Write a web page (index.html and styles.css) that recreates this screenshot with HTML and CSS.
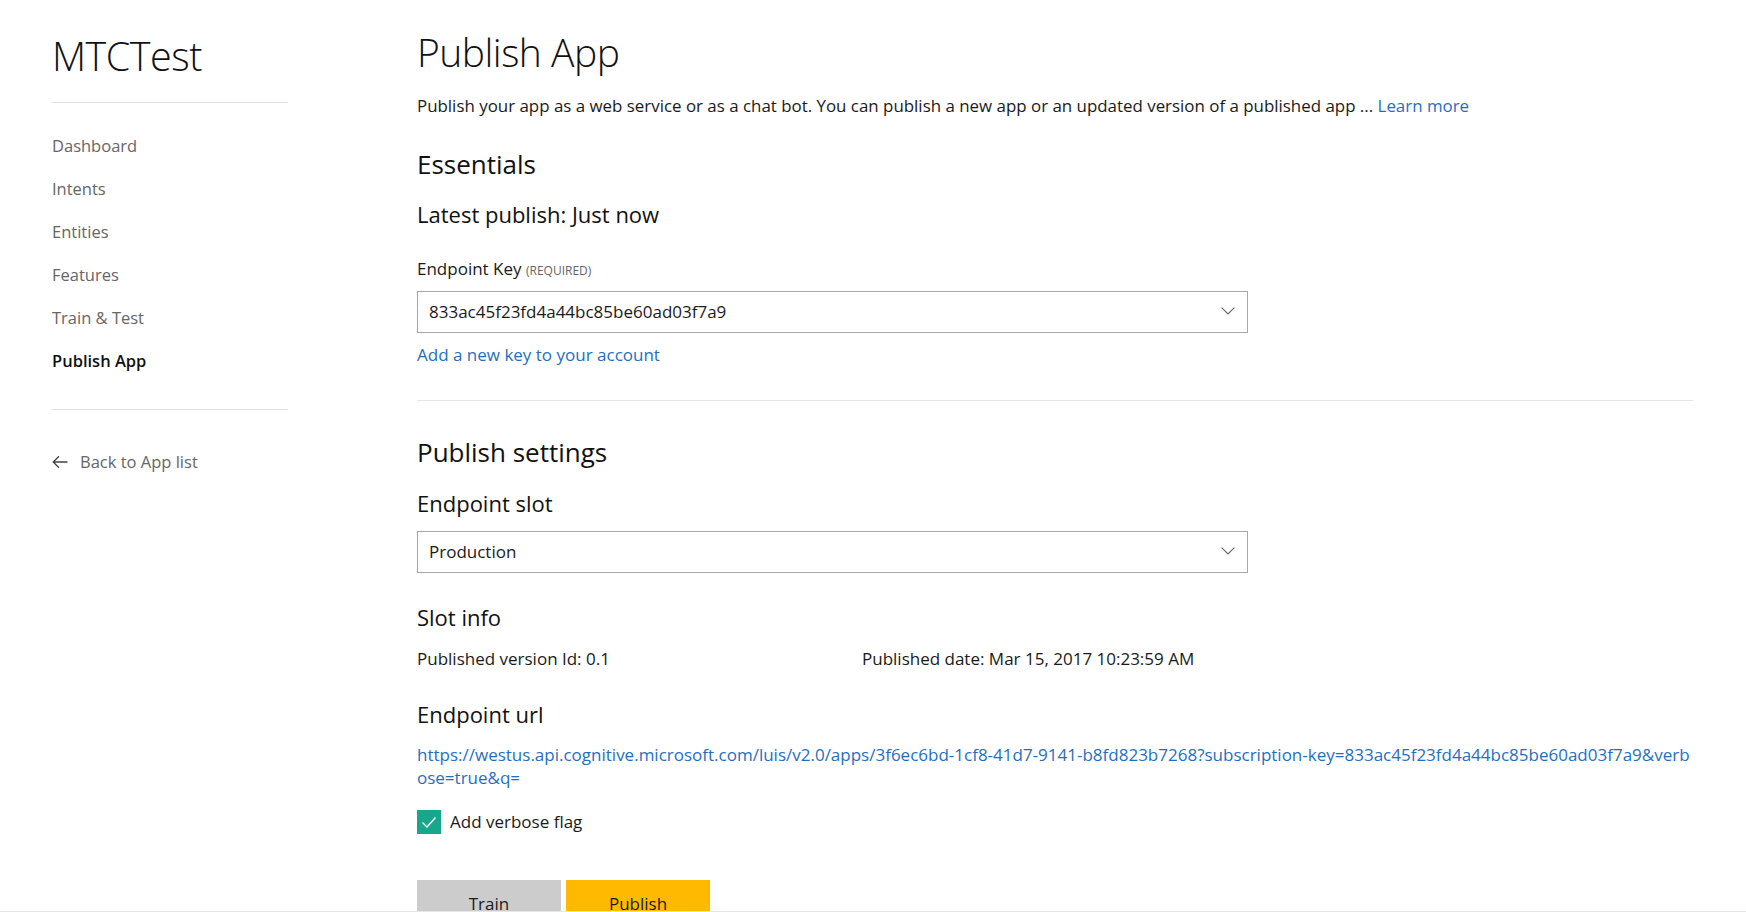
FILE: index.html
```html
<!DOCTYPE html>
<html lang="en">
<head>
<meta charset="utf-8">
<title>Publish App</title>
<link rel="stylesheet" href="styles.css">
</head>
<body>
<div class="page">
  <aside class="sidebar">
    <div class="app-name">MTCTest</div>
    <hr class="side-rule">
    <nav class="nav">
      <a class="nav-item">Dashboard</a>
      <a class="nav-item">Intents</a>
      <a class="nav-item">Entities</a>
      <a class="nav-item">Features</a>
      <a class="nav-item">Train &amp; Test</a>
      <a class="nav-item active">Publish App</a>
    </nav>
    <hr class="side-rule second">
    <a class="back">
      <svg class="back-arrow" width="16" height="14" viewBox="0 0 16 14"><path d="M15.5 7H1.2M7 1.2L1.2 7L7 12.8" fill="none" stroke="#444" stroke-width="1.3"/></svg>
      <span>Back to App list</span>
    </a>
  </aside>
  <main class="main">
    <h1 class="title">Publish App</h1>
    <p class="desc">Publish your app as a web service or as a chat bot. You can publish a new app or an updated version of a published app ... <a class="link">Learn more</a></p>
    <h2 class="section">Essentials</h2>
    <h3 class="sub latest">Latest publish: Just now</h3>
    <div class="label">Endpoint Key <span class="req">(REQUIRED)</span></div>
    <div class="select">
      <span>833ac45f23fd4a44bc85be60ad03f7a9</span>
      <svg class="chev" width="14" height="8" viewBox="0 0 14 8"><path d="M0.6 0.6L7 7L13.4 0.6" fill="none" stroke="#666" stroke-width="1.1"/></svg>
    </div>
    <a class="link add-key">Add a new key to your account</a>
    <hr class="sep">
    <h2 class="section settings">Publish settings</h2>
    <h3 class="sub slot">Endpoint slot</h3>
    <div class="select slot-select">
      <span>Production</span>
      <svg class="chev" width="14" height="8" viewBox="0 0 14 8"><path d="M0.6 0.6L7 7L13.4 0.6" fill="none" stroke="#666" stroke-width="1.1"/></svg>
    </div>
    <h3 class="sub info">Slot info</h3>
    <div class="info-row">
      <span class="info-col">Published version Id: 0.1</span>
      <span>Published date: Mar 15, 2017 10:23:59 AM</span>
    </div>
    <h3 class="sub url-head">Endpoint url</h3>
    <a class="link url">https://westus.api.cognitive.microsoft.com/luis/v2.0/apps/3f6ec6bd-1cf8-41d7-9141-b8fd823b7268?subscription-key=833ac45f23fd4a44bc85be60ad03f7a9&amp;verb<br>ose=true&amp;q=</a>
    <label class="check-row">
      <span class="checkbox"><svg width="24" height="24" viewBox="0 0 24 24"><path d="M5.5 12.5L10 17L18.5 7.5" fill="none" stroke="#fff" stroke-width="1.4"/></svg></span>
      <span>Add verbose flag</span>
    </label>
    <div class="buttons">
      <button class="btn train">Train</button>
      <button class="btn publish">Publish</button>
    </div>
  </main>
</div>
</body>
</html>
```
FILE: styles.css
```css
* { box-sizing: border-box; }
html, body { margin: 0; padding: 0; background: #fff; }
body {
  font-family: "Open Sans", "Noto Sans", sans-serif;
  color: #1a1a1a;
  overflow: hidden;
}
.page {
  height: 912px;
  overflow: hidden;
  display: flex;
  border-bottom: 1px solid #e6e6e6;
}
.sidebar {
  width: 288px;
  padding: 32px 0 0 52px;
  flex: none;
}
.app-name {
  font-size: 39.5px;
  font-weight: 300;
  line-height: 48px;
  color: #111;
  letter-spacing: -0.5px;
}
.side-rule {
  border: 0;
  border-top: 1px solid #e1e1e1;
  margin: 22px 0 0 0;
  width: 236px;
}
.side-rule.second { margin-top: 27px; }
.nav {
  display: flex;
  flex-direction: column;
  margin-top: 21px;
}
.nav-item {
  font-size: 16.5px;
  line-height: 43px;
  color: #666;
}
.nav-item.active { color: #111; font-weight: 600; }
.back {
  display: flex;
  align-items: center;
  gap: 12px;
  margin-top: 40px;
  font-size: 16.5px;
  line-height: 24px;
  color: #666;
}
.back-arrow { flex: none; }
.main {
  margin-left: 129px;
  width: 1276px;
  padding-top: 28px;
  flex: none;
}
.title {
  margin: 0;
  font-size: 39px;
  font-weight: 300;
  line-height: 48px;
  color: #111;
  letter-spacing: -0.5px;
}
.desc {
  margin: 18px 0 0 0;
  font-size: 16.9px;
  line-height: 24px;
  color: #1a1a1a;
}
.link { color: #1f6fc1; text-decoration: none; }
.section {
  margin: 28px 0 0 0;
  font-size: 26px;
  font-weight: 400;
  line-height: 36px;
  color: #111;
}
.sub {
  margin: 17px 0 0 0;
  font-size: 22px;
  font-weight: 400;
  line-height: 30px;
  color: #111;
}
.label {
  margin-top: 28px;
  font-size: 17px;
  line-height: 24px;
  color: #1a1a1a;
}
.req {
  font-size: 12px;
  color: #666;
}
.select {
  margin-top: 8px;
  width: 831px;
  height: 42px;
  border: 1px solid #a8a8a8;
  display: flex;
  align-items: center;
  justify-content: space-between;
  padding: 0 11px 0 11px;
  font-size: 17px;
  line-height: 40px;
  color: #1a1a1a;
}
.chev { margin-top: -2px; margin-right: 1px; }
.add-key {
  display: block;
  margin-top: 10px;
  font-size: 17px;
  line-height: 24px;
}
.sep {
  border: 0;
  border-top: 1px solid #e6e6e6;
  margin: 33px 0 0 0;
}
.section.settings { margin-top: 33px; }
.sub.slot { margin-top: 18px; }
.slot-select { margin-top: 13px; }
.sub.info { margin-top: 29px; }
.info-row {
  display: flex;
  margin-top: 15px;
  font-size: 17px;
  line-height: 24px;
}
.info-col { width: 445px; }
.sub.url-head { margin-top: 28px; }
.url {
  display: block;
  margin-top: 14px;
  font-size: 17px;
  line-height: 23px;
  white-space: nowrap;
}
.check-row {
  display: flex;
  align-items: center;
  gap: 9px;
  margin-top: 21px;
  font-size: 17px;
  line-height: 24px;
  color: #1a1a1a;
}
.checkbox {
  width: 24px;
  height: 24px;
  background: #17a88b;
  display: block;
}
.checkbox svg { display: block; }
.buttons {
  display: flex;
  gap: 5px;
  margin-top: 46px;
}
.btn {
  width: 144px;
  height: 48px;
  border: 0;
  padding: 0;
  font-family: inherit;
  font-size: 17px;
  line-height: 48px;
  color: #1a1a1a;
}
.btn.train { background: #cccccc; }
.btn.publish { background: #ffb900; }
```
